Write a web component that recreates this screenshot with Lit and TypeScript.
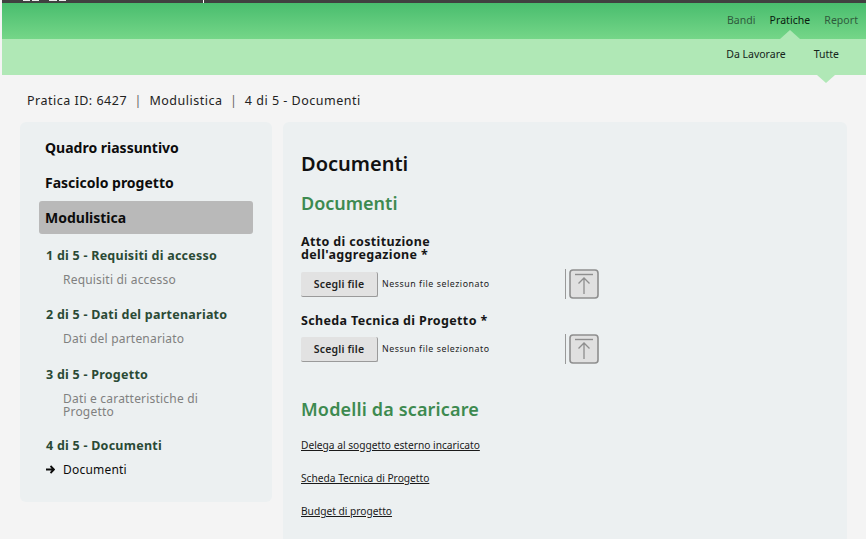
import { LitElement, html, css } from "lit";
import { customElement } from "lit/decorators.js";

const uploadIcon = html`<svg class="up" width="30" height="30" viewBox="0 0 30 30" aria-hidden="true">
  <rect x="1" y="1" width="28" height="28" rx="3" fill="#e0e0e0" stroke="#8e8e8e" stroke-width="1.6"/>
  <path d="M6 5.5H24" stroke="#8e8e8e" stroke-width="1.4" fill="none"/>
  <path d="M15 25V9M9.5 14.5L15 9L20.5 14.5" stroke="#8e8e8e" stroke-width="1.3" fill="none"/>
</svg>`;

@customElement("app-root")
export class AppRoot extends LitElement {
  static styles = css`
    :host {
      display: block;
      width: 866px;
      height: 539px;
      overflow: hidden;
      background: #f4f4f4;
      font-family: "Noto Sans", "Open Sans", sans-serif;
      color: #111;
    }
    .head { margin-left: 2px; }
    .top { height: 3px; background: #404040; display: flex; }
    .logo {
      width: 43px;
      height: 1px;
      margin-left: 21px;
      background: linear-gradient(90deg, #eee 0 7px, #404040 7px 9px, #eee 9px 16px, #404040 16px 26px, #eee 26px 34px, #404040 34px 36px, #eee 36px);
    }
    .tick { width: 1px; height: 3px; margin-left: 137px; background: #fff; }
    .nav1 {
      height: 36px;
      background: linear-gradient(#49bd6e, #75d688);
      display: flex;
      justify-content: flex-end;
      align-items: flex-start;
      gap: 14px;
      padding: 10px 8px 0 0;
      box-sizing: border-box;
      font-size: 10.5px;
      letter-spacing: 0.05px;
      line-height: 15px;
    }
    .nav1 span { color: #2f5a3c; position: relative; }
    .nav1 span.on { color: #0a1a0e; }
    .nav1 span.on::after {
      content: "";
      position: absolute;
      left: 50%;
      bottom: -11px;
      margin-left: -10px;
      border: 10px solid transparent;
      border-top: 0;
      border-bottom: 9px solid #b0e8b6;
    }
    .nav2 {
      height: 36px;
      background: #b0e8b6;
      display: flex;
      justify-content: flex-end;
      gap: 28px;
      padding: 8px 27px 0 0;
      box-sizing: border-box;
      font-size: 10.5px;
      line-height: 15px;
      color: #14241a;
    }
    .nav2 span { position: relative; }
    .nav2 span.on::after {
      content: "";
      position: absolute;
      left: 50%;
      top: 28px;
      margin-left: -9px;
      border: 9px solid transparent;
      border-bottom: 0;
      border-top: 8px solid #b0e8b6;
    }
    .crumb {
      padding: 17px 0 0 27px;
      height: 30px;
      font-size: 12.5px;
      letter-spacing: 0.5px;
      line-height: 17px;
      color: #222;
      white-space: pre;
    }
    .sep { color: #666; }
    .cols {
      display: grid;
      grid-template-columns: 252px 564px;
      gap: 11px;
      padding-left: 20px;
      align-items: start;
    }
    .side {
      height: 380px;
      box-sizing: border-box;
      background: #ecf0f1;
      border-radius: 6px;
      padding: 9px 19px 0;
    }
    .top-link {
      height: 33px;
      margin-bottom: 2px;
      padding-left: 6px;
      font-size: 14px;
      font-weight: 700;
      line-height: 33px;
      color: #0c0c0c;
      border-radius: 3px;
    }
    .top-link.on { background: #b9b9b9; }
    .step {
      padding-left: 7px;
      font-size: 12.5px;
      font-weight: 700;
      letter-spacing: 0.25px;
      line-height: 16px;
      color: #2a4a35;
      margin-top: 14px;
    }
    .sub {
      padding-left: 24px;
      width: 150px;
      font-size: 12px;
      letter-spacing: 0.2px;
      line-height: 13px;
      color: #808080;
      margin-top: 9px;
      margin-bottom: 21.4px;
    }
    .sub.wrap { margin-bottom: 20px; }
    .sub.cur {
      color: #0c0c0c;
      padding-left: 7px;
      display: flex;
      gap: 8px;
      align-items: center;
    }
    .main {
      height: 417px;
      box-sizing: border-box;
      background: #ecf0f1;
      border-radius: 6px 6px 0 0;
      padding: 28px 18px 0;
    }
    h1 {
      margin: 0;
      font-size: 20px;
      font-weight: 600;
      line-height: 28px;
      color: #111;
    }
    h2 {
      margin: 12px 0 0;
      font-size: 18px;
      font-weight: 600;
      line-height: 26px;
      color: #3d8a50;
    }
    .models h2 { letter-spacing: 0.15px; }
    .lab {
      font-size: 12.5px;
      font-weight: 700;
      letter-spacing: 0.35px;
      line-height: 13px;
      color: #161616;
      width: 180px;
    }
    .lab.a { margin-top: 19px; margin-bottom: 8px; }
    .lab.b { margin-top: 14px; margin-bottom: 6px; width: 240px; line-height: 15px; }
    .file {
      display: flex;
      align-items: center;
      height: 30px;
    }
    .btn {
      width: 77px;
      height: 25px;
      box-sizing: border-box;
      background: #e2e2e2;
      border: 0;
      border-right: 1px solid #9a9a9a;
      border-bottom: 1px solid #9a9a9a;
      border-radius: 2px;
      font-size: 10.5px;
      font-weight: 600;
      letter-spacing: 0.2px;
      line-height: 24px;
      text-align: center;
      color: #222;
    }
    .none {
      margin-left: 4px;
      width: 183px;
      font-size: 8.8px;
      letter-spacing: 0.55px;
      color: #222;
    }
    .bar { width: 1px; height: 30px; background: #999; margin-right: 3px; }
    .models { margin-top: 32px; }
    .dl {
      display: block;
      font-size: 10.2px;
      line-height: 14px;
      color: #1a1a1a;
      text-decoration: underline;
      margin-top: 19px;
    }
    .models .dl:first-of-type { margin-top: 16px; }
    .arrow { display: block; flex: none; }
  `;

  private file() {
    return html`<div class="file">
      <div class="btn">Scegli file</div>
      <div class="none">Nessun file selezionato</div>
      <div class="bar"></div>
      ${uploadIcon}
    </div>`;
  }

  render() {
    return html`
      <div class="head">
        <div class="top"><div class="logo"></div><div class="tick"></div></div>
        <div class="nav1"><span>Bandi</span><span class="on">Pratiche</span><span>Report</span></div>
        <div class="nav2"><span>Da Lavorare</span><span class="on">Tutte</span></div>
      </div>
      <div class="crumb">Pratica ID: 6427  <span class="sep">|</span>  Modulistica  <span class="sep">|</span>  4 di 5 - Documenti</div>
      <div class="cols">
        <aside class="side">
          <div class="top-link">Quadro riassuntivo</div>
          <div class="top-link">Fascicolo progetto</div>
          <div class="top-link on">Modulistica</div>
          <div class="step">1 di 5 - Requisiti di accesso</div>
          <div class="sub">Requisiti di accesso</div>
          <div class="step">2 di 5 - Dati del partenariato</div>
          <div class="sub">Dati del partenariato</div>
          <div class="step">3 di 5 - Progetto</div>
          <div class="sub wrap">Dati e caratteristiche di Progetto</div>
          <div class="step">4 di 5 - Documenti</div>
          <div class="sub cur">
            <svg class="arrow" width="9" height="9" viewBox="0 0 9 9" aria-hidden="true"><path d="M0 4.5H7.5M4.5 1L8 4.5L4.5 8" fill="none" stroke="#0c0c0c" stroke-width="1.8"/></svg>
            <span>Documenti</span>
          </div>
        </aside>
        <main class="main">
          <h1>Documenti</h1>
          <h2>Documenti</h2>
          <div class="lab a">Atto di costituzione dell'aggregazione *</div>
          ${this.file()}
          <div class="lab b">Scheda Tecnica di Progetto *</div>
          ${this.file()}
          <div class="models">
            <h2>Modelli da scaricare</h2>
            <a class="dl">Delega al soggetto esterno incaricato</a>
            <a class="dl">Scheda Tecnica di Progetto</a>
            <a class="dl">Budget di progetto</a>
          </div>
        </main>
      </div>
    `;
  }
}
